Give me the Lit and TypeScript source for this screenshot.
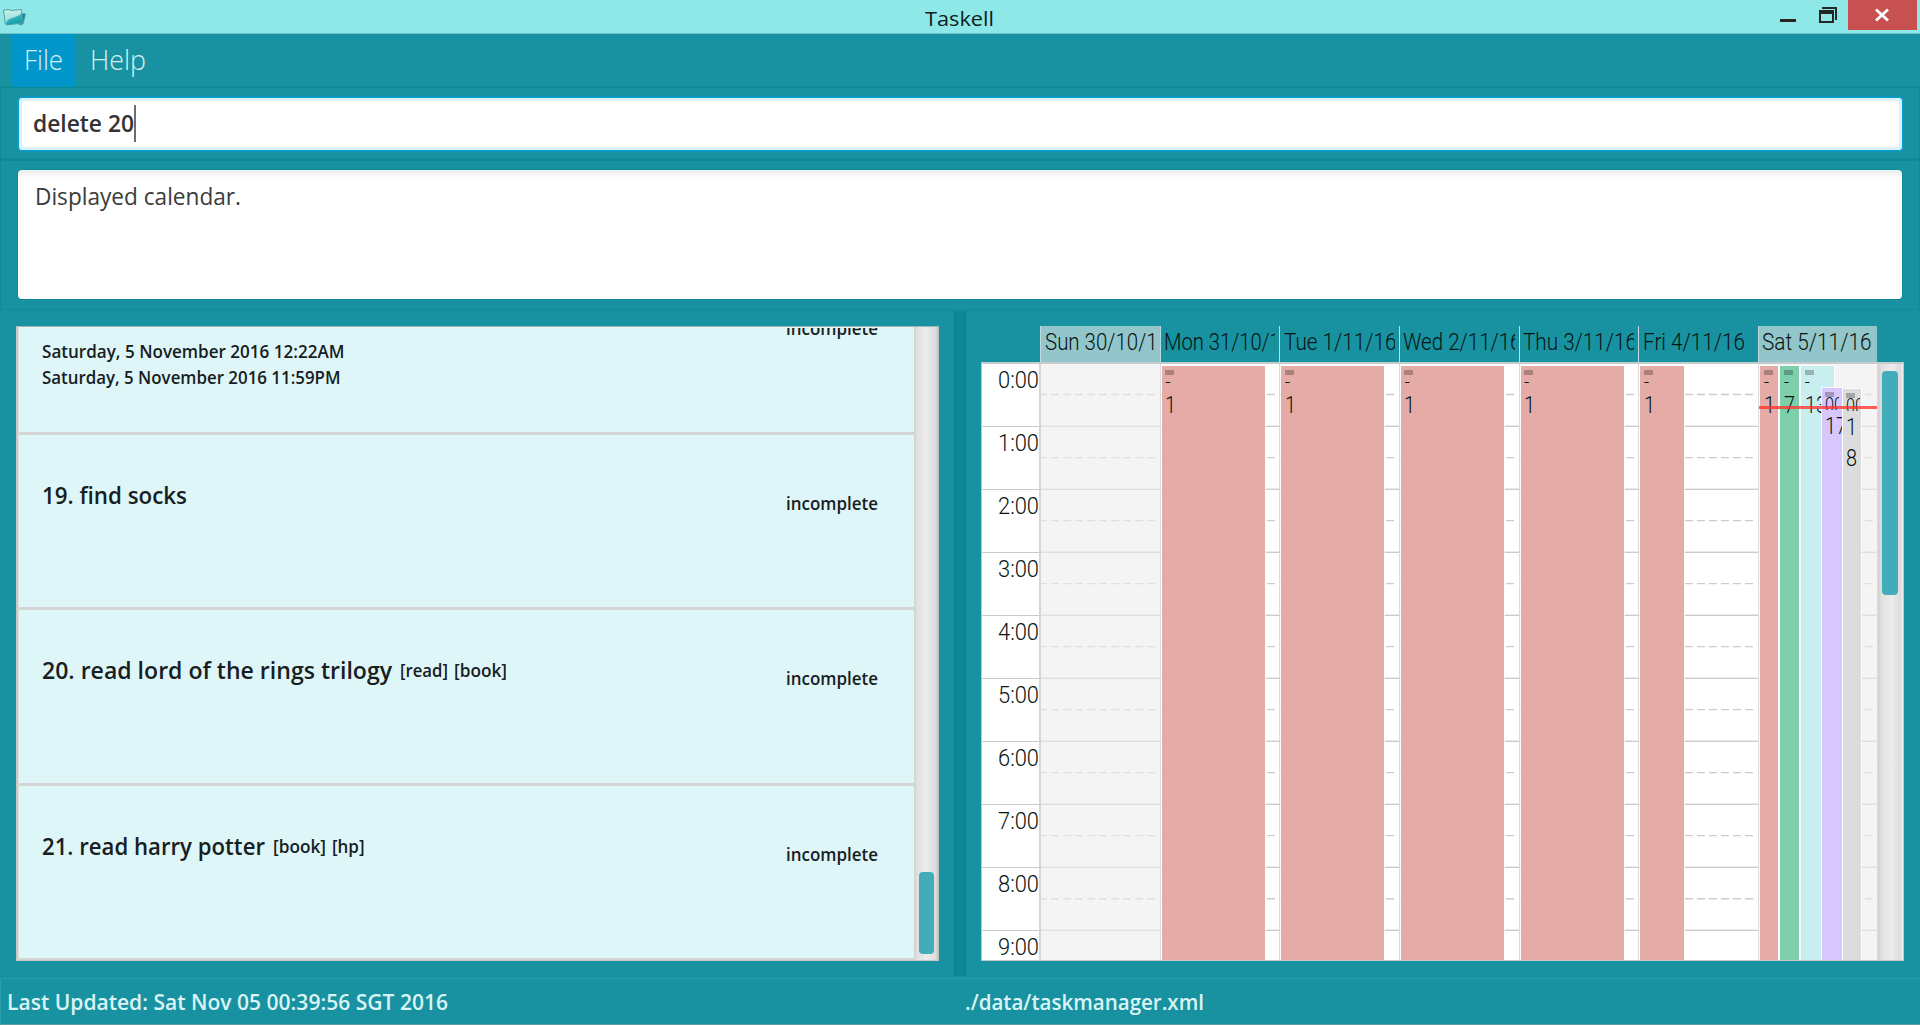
import { LitElement, html, css, svg } from "lit";
import { customElement, property } from "lit/decorators.js";

/** Text squeezed horizontally so that it takes exactly the given width. */
@customElement("fit-text")
class FitText extends LitElement {
  @property({ type: Number }) w = 0;
  static styles = css`
    :host { display: inline-block; white-space: pre; overflow: visible; }
    .t { display: inline-block; transform-origin: 0 50%; }
  `;
  firstUpdated() {
    const t = this.renderRoot.querySelector(".t") as HTMLElement;
    const natural = t.getBoundingClientRect().width;
    if (natural && this.w) {
      t.style.transform = `scaleX(${this.w / natural})`;
      this.style.width = `${this.w}px`;
    }
  }
  render() { return html`<span class="t"><slot></slot></span>`; }
}

@customElement("title-bar")
class TitleBar extends LitElement {
  static styles = css`
    :host { display: grid; grid-template-columns: 1fr auto 1fr; height: 33px; background: #8ee8e7; border-bottom: 1px solid #6fc5c9; box-sizing: content-box; font: 20.5px/28px "Open Sans", sans-serif; color: #10201f; }
    .icon { display: block; margin: 7px 0 0 2px; }
    .title { padding: 4px 2px 0 0; height: 28px; }
    .controls { display: flex; justify-content: flex-end; padding-right: 3px; }
    .glyphs { display: block; width: 69px; height: 30px; margin-right: 0; }
    .close { width: 69px; height: 30px; background: #c75050; }
  `;
  render() {
    return html`
      <svg class="icon" width="26" height="20" viewBox="0 0 26 20">
        <defs>
          <linearGradient id="a" x1="0" y1="0" x2="0" y2="1"><stop offset="0" stop-color="#c8efec"/><stop offset="1" stop-color="#8fd8d9"/></linearGradient>
          <linearGradient id="b" x1="0" y1="0" x2="0.4" y2="1"><stop offset="0" stop-color="#5ccbd0"/><stop offset="1" stop-color="#0c9fac"/></linearGradient>
        </defs>
        <path d="M18 6.5 L23.5 7 L21 17 L17 18Z" fill="#128a98" stroke="#3f9aa2" stroke-width=".8"/>
        <path d="M1.5 3 L7 2.5 L8.5 3.5 L19.5 2.5 L20.5 16 L4.5 18 L3 16Z" fill="url(#a)" stroke="#5a9da0" stroke-width="1"/>
        <path d="M4 16 C6 10 13 12 20 6 L20.3 15.5 L5 17.7Z" fill="url(#b)"/>
      </svg>
      <div class="title"><fit-text w="69">Taskell</fit-text></div>
      <div class="controls">
        <svg class="glyphs" viewBox="0 0 69 30" shape-rendering="crispEdges" fill="#262626">
          <rect x="1" y="19" width="16" height="3"/>
          <path d="M43 7H58V20H56V9H43Z"/>
          <path fill-rule="evenodd" d="M40 10H55V23H40Z M42 14V21H53V14Z"/>
        </svg>
        <svg class="close" viewBox="0 0 69 30"><path d="M28 9.5L40 20.5M40 9.5L28 20.5" stroke="#fff" stroke-width="2.8"/></svg>
      </div>`;
  }
}

interface Task { title?: string; tw?: number; tags?: [string, number][]; dates?: [string, number][]; }
const TASKS: Task[] = [
  { title: "19. find socks", tw: 145 },
  { title: "20. read lord of the rings trilogy", tw: 350, tags: [["[read]", 48], ["[book]", 53]] },
  { title: "21. read harry potter", tw: 223, tags: [["[book]", 53], ["[hp]", 32.5]] },
];

@customElement("task-list")
class TaskList extends LitElement {
  static styles = css`
    :host { display: grid; grid-template-columns: 1fr 24px; height: 635px; box-sizing: border-box; border: 1px solid #bdbdbd; border-top-color: #9ab9ba; border-left: 2px solid #c6c8c8; border-bottom: 1px solid #c8c8c8; font-family: "Open Sans", sans-serif; color: #17201f; overflow: hidden; background: #dff6f9; }
    .cells { border-left: 1px solid #dfe3e3; border-top: 1px solid #eaf4f5; min-width: 0; overflow: hidden; }
    .cell { display: flex; justify-content: space-between; box-sizing: border-box; height: 175.4px; border-bottom: 3px solid #d5d5d5; padding: 0 36px 0 23px; background: #dff6f9; font-weight: 600; }
    .first { height: 107px; }
    .head { display: flex; padding-top: 43px; height: 34px; line-height: 34px; font-size: 24px; }
    .tag { font-size: 17.5px; margin-left: 6px; }
    .tag:first-of-type { margin-left: 8px; }
    .state { font-size: 17.5px; line-height: 24px; padding-top: 56px; }
    .cut { margin-top: -12px; padding: 0; }
    .dates { padding-top: 10px; font-size: 17.5px; line-height: 26px; display: flex; flex-direction: column; }
    .bar { background: linear-gradient(90deg, #cfcfcf, #e0e0e0 12%, #ececec 50%, #dcdcdc 90%, #c4c4c4); display: flex; justify-content: center; align-items: flex-end; padding: 0 0 6px 1px; box-sizing: border-box; }
    .thumb { width: 15px; height: 82px; border-radius: 4px; background: #42acb8; }
  `;
  render() {
    return html`
      <div class="cells">
        <div class="cell first">
          <div class="dates">
            <fit-text w="302.5">Saturday, 5 November 2016 12:22AM</fit-text>
            <fit-text w="298.5">Saturday, 5 November 2016 11:59PM</fit-text>
          </div>
          <div class="state cut"><fit-text w="92">incomplete</fit-text></div>
        </div>
        ${TASKS.map((t) => html`<div class="cell">
          <div class="head"><fit-text w=${t.tw}>${t.title}</fit-text>
            ${(t.tags ?? []).map(([n, w]) => html`<span class="tag"><fit-text w=${w}>${n}</fit-text></span>`)}</div>
          <div class="state"><fit-text w="92">incomplete</fit-text></div>
        </div>`)}
      </div>
      <div class="bar"><div class="thumb"></div></div>`;
  }
}

interface Appt { x: number; w: number; y: number; c: string; dash?: boolean; small?: string; lines: [string, number][]; tx: number; }
interface Day { name: string; w: number; weekend?: boolean; appts: Appt[]; }
const RED = "#e5aca7";
const busy = (w: number): Appt => ({ x: 1, w, y: 0, c: RED, dash: true, lines: [["1", 11]], tx: 4 });
const DAYS: Day[] = [
  { name: "Sun 30/10/16", w: 124, weekend: true, appts: [] },
  { name: "Mon 31/10/16", w: 128, appts: [busy(103)] },
  { name: "Tue 1/11/16", w: 112.5, appts: [busy(103)] },
  { name: "Wed 2/11/16", w: 118.5, appts: [busy(103)] },
  { name: "Thu 3/11/16", w: 114, appts: [busy(103)] },
  { name: "Fri 4/11/16", w: 102, appts: [busy(44)] },
  { name: "Sat 5/11/16", w: 109.5, weekend: true, appts: [
    { x: 1.5, w: 18, y: 0, c: RED, dash: true, lines: [["1", 11]], tx: 4 },
    { x: 21.5, w: 19, y: 0, c: "#7dcfab", dash: true, lines: [["7", 11]], tx: 4 },
    { x: 42.2, w: 33, y: 0, c: "#c8eef0", dash: true, lines: [["13", 22]], tx: 4 },
    { x: 63.2, w: 20, y: 21.5, c: "#d8c6ff", small: "00", lines: [["17", 22]], tx: 3.5 },
    { x: 84.5, w: 18, y: 23, c: "#dcdcdc", small: "00", lines: [["1", 11], ["8", 11]], tx: 3.5 },
  ] },
];

@customElement("week-calendar")
class WeekCalendar extends LitElement {
  static styles = css`
    :host { display: block; width: 923px; height: 635px; font: 300 24.5px/30px Roboto, sans-serif; color: #061412; }
    .head { display: flex; height: 36px; padding-left: 59px; }
    .name { width: 119.65px; box-sizing: border-box; border-left: 1px solid #bfd9dc; padding: 1px 4px 0 3.5px; }
    .clip { overflow: hidden; height: 34px; padding-top: 0; }
    .weekend { background: #92c6cb; }
    .body { display: grid; grid-template-columns: 59px 838px 24px; height: 599px; box-sizing: border-box; border: 1px solid #c4c4c4; border-top: 2px solid #c6cccc; background: #fff; overflow: hidden; }
    .hours { border-right: 2px solid #d6d6d6; box-sizing: border-box; }
    .hour { height: 63.03px; box-sizing: border-box; border-bottom: 1px solid #cacaca; text-align: right; padding: 0.6px 0.5px 0 0; }
    .days { display: flex; position: relative; }
    .day { position: relative; width: 119.65px; flex: none; box-sizing: border-box; border-right: 1px solid #dcdcdc; }
    .off { background: #f4f4f4; }
    .grid { display: block; width: 119px; height: 596px; }
    .appt { position: absolute; bottom: 0; outline: 1.5px solid rgba(255, 255, 255, .75); overflow: hidden; box-sizing: border-box; }
    .inner { overflow: hidden; height: 130px; }
    .mark { display: block; width: 9px; height: 5px; margin-top: 4px; background: rgba(0, 0, 0, .25); }
    .minus { height: 14px; line-height: 14px; }
    .small { height: 14px; line-height: 19px; font-size: 20px; margin-top: -1px; width: 14px; overflow: hidden; }
    .num { line-height: 31px; height: 31px; margin-top: 0; }
    .dashtext { display: block; font-size: 19px; line-height: 14px; }
    .now { position: absolute; left: 0; top: 42px; height: 3px; right: 0; background: rgba(255, 50, 45, .78); }
    .bar { background: linear-gradient(90deg, #cfcfcf, #e0e0e0 14%, #ececec 55%, #dcdcdc 90%, #f4f4f4); display: flex; justify-content: flex-start; align-items: flex-start; padding: 7px 0 0 4px; margin-left: -1px; box-sizing: border-box; position: relative; }
    .thumb { width: 16px; height: 224px; border-radius: 4px; background: #42acb8; }
  `;
  grid(off?: boolean) {
    const rows = Array.from({ length: 10 }, (_, i) => i);
    const c = off ? "#dfdfdf" : "#cccccc";
    return html`<svg class="grid" viewBox="0 0 119 596">${rows.map((i) => svg`
      <rect x="0" y=${Math.round(62 + i * 63.03) - 0.4} width="119" height="1.4" fill=${c}/>
      <line x1="-2" x2="115" y1=${30.5 + i * 63.03} y2=${30.5 + i * 63.03} stroke=${c} stroke-width="1.3" stroke-dasharray="8 4"/>`)}</svg>`;
  }
  appt(a: Appt) {
    return html`<div class="appt" style="left:${a.x}px;width:${a.w}px;top:${a.y + 2}px;background:${a.c};padding-left:${a.tx - 0.5}px">
      <div class="inner"><span class="mark"></span>
        ${a.dash ? html`<div class="minus"><span class="dashtext">-</span></div>` : html`<div class="small"><fit-text w="18">${a.small}</fit-text></div>`}
        ${a.lines.map(([t, w]) => html`<div class="num"><fit-text w=${w}>${t}</fit-text></div>`)}
      </div></div>`;
  }
  render() {
    return html`
      <div class="head">${DAYS.map((d) => html`<div class="name ${d.weekend ? "weekend" : ""}"><div class="clip"><fit-text w=${d.w}>${d.name}</fit-text></div></div>`)}</div>
      <div class="body">
        <div class="hours">${Array.from({ length: 10 }, (_, i) => html`<div class="hour"><fit-text w="41">${i}:00</fit-text></div>`)}</div>
        <div class="days">
          ${DAYS.map((d, i) => html`<div class="day ${d.weekend ? "off" : ""}">${this.grid(d.weekend)}${d.appts.map((a) => this.appt(a))}${i === 6 ? html`<div class="now"></div>` : ""}</div>`)}
        </div>
        <div class="bar"><div class="thumb"></div></div>
      </div>`;
  }
}

@customElement("app-root")
class AppRoot extends LitElement {
  static styles = css`
    :host { display: flex; flex-direction: column; width: 1920px; height: 1025px; background: #1892a0; overflow: hidden; font-family: "Open Sans", sans-serif; }
    .menu { display: flex; height: 52px; padding-left: 12px; font-size: 27px; line-height: 30px; font-weight: 300; color: #d6f1f3; }
    .item { padding: 11px 13px 0 11.5px; margin-right: 3px; line-height: 30px; height: 42px; box-sizing: border-box; }
    .active { background: #0096c9; height: 53px; position: relative; }
    .pane { box-sizing: border-box; border: 2px solid #0f8995; border-width: 2px 1px; }
    .cmd { height: 74px; padding: 8.5px 16px 0 16.5px; }
    .field { display: flex; align-items: flex-start; height: 54px; box-sizing: border-box; border: 1px solid #039ed3; border-radius: 4px; background: #fff; box-shadow: inset 0 0 0 3px #def1f9, 0 0 0 .5px #039ed3; padding: 7px 0 0 14.5px; font-size: 24px; line-height: 36px; font-weight: 600; color: #333; }
    .caret { width: 2px; height: 37px; background: #6d6d6d; }
    .result { height: 150px; padding: 9px 17px 0 17px; border-top: 1px solid #0f8995; border-bottom: 1px solid #128b97; }
    .area { height: 129px; box-sizing: border-box; border-radius: 4px; background: linear-gradient(#ececec, #fff 7px); border-top: 1px solid #e6fafa; box-shadow: 0 0 0 1px #0f8995; font-size: 24px; line-height: 34px; color: #3b3b3b; padding: 8px 16.5px; }
    .main { display: grid; grid-template-columns: 923px 12px 923px; column-gap: 15px; padding-left: 16px; height: 667px; box-sizing: border-box; }
    .main > * { margin-top: 16px; }
    .main > .split { margin-top: 1px; height: 665px; background: #0b8a96; box-shadow: inset 1px 0 #08808c, inset -1px 0 #08808c; }
    .status { display: grid; grid-template-columns: 958px 1fr; box-sizing: border-box; height: 47px; border-top: 1px solid #2a9dab; border-left: 1px solid #2a9dab; border-bottom: 1px solid #5d9da3; padding: 6px 0 0 6px; font-size: 22px; line-height: 32px; font-weight: 600; color: #daf4f5; margin-top: 1px; }
  `;
  render() {
    return html`
      <title-bar></title-bar>
      <div class="menu">
        <div class="item active"><fit-text w="39">File</fit-text></div>
        <div class="item"><fit-text w="56">Help</fit-text></div>
      </div>
      <div class="pane cmd"><div class="field"><fit-text w="101">delete 20</fit-text><span class="caret"></span></div></div>
      <div class="pane result"><div class="area"><fit-text w="206">Displayed calendar.</fit-text></div></div>
      <div class="main"><task-list></task-list><div class="split"></div><week-calendar></week-calendar></div>
      <div class="status"><fit-text w="441">Last Updated: Sat Nov 05 00:39:56 SGT 2016</fit-text><fit-text w="239">./data/taskmanager.xml</fit-text></div>`;
  }
}
